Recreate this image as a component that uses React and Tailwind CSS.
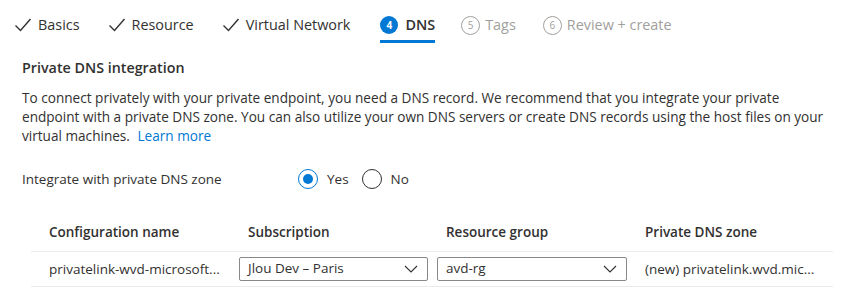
import React from "react";

function Check() {
  return (
    <svg width="18" height="18" viewBox="0 0 18 18" fill="none">
      <path d="M1.5 9.5 L6.5 14.5 L16.5 3" stroke="#323130" strokeWidth="1.4" />
    </svg>
  );
}

function Chevron() {
  return (
    <svg width="14" height="8" viewBox="0 0 14 8" fill="none">
      <path d="M1 1 L7 7 L13 1" stroke="#323130" strokeWidth="1.1" />
    </svg>
  );
}

function Select({ value, w }) {
  return (
    <div className={`flex items-center justify-between h-[24px] border border-[#8a8886] rounded-[2px] pl-[8px] pr-[9px] ${w}`}>
      <span className="text-[13.5px] leading-none">{value}</span>
      <Chevron />
    </div>
  );
}

export default function App() {
  return (
    <div className="w-[863px] h-[295px] bg-white text-[#323130] font-['Open_Sans',sans-serif] overflow-hidden">
      {/* Tabs */}
      <div className="flex items-start pl-[14px] pt-[13px] h-[44px] text-[14.4px]">
        <div className="flex items-center gap-[6px] h-[24px]">
          <Check />
          <span>Basics</span>
        </div>
        <div className="flex items-center gap-[6px] h-[24px] ml-[28px]">
          <Check />
          <span>Resource</span>
        </div>
        <div className="flex items-center gap-[6px] h-[24px] ml-[28px]">
          <Check />
          <span>Virtual Network</span>
        </div>
        <div className="flex flex-col ml-[30px]">
          <div className="flex items-center gap-[7px] h-[24px]">
            <span className="w-[18px] h-[18px] rounded-full bg-[#0078d4] text-white text-[10px] font-bold flex items-center justify-center">4</span>
            <span className="font-semibold">DNS</span>
          </div>
          <div className="h-[3px] bg-[#0078d4] mt-[3px]" />
        </div>
        <div className="flex items-center gap-[5px] h-[24px] text-[#a19f9d] ml-[26px]">
          <span className="w-[19px] h-[19px] rounded-full border border-[#a19f9d] text-[10px] flex items-center justify-center">5</span>
          <span>Tags</span>
        </div>
        <div className="flex items-center gap-[5px] h-[24px] text-[#a19f9d] ml-[27px]">
          <span className="w-[19px] h-[19px] rounded-full border border-[#a19f9d] text-[10px] flex items-center justify-center">6</span>
          <span>Review + create</span>
        </div>
      </div>

      <div className="pl-[22px] pr-[20px]">
        <h2 className="text-[14.3px] font-semibold mt-[14px] leading-[20px]">Private DNS integration</h2>
        <p className="text-[13.6px] leading-[19px] mt-[10px]">
          <span className="block whitespace-nowrap">To connect privately with your private endpoint, you need a DNS record. We recommend that you integrate your private</span>
          <span className="block whitespace-nowrap">endpoint with a private DNS zone. You can also utilize your own DNS servers or create DNS records using the host files on your</span>
          <span className="block whitespace-nowrap">virtual machines. <span className="ml-[4px] text-[#0078d4]">Learn more</span></span>
        </p>

        <div className="flex items-center mt-[22px] h-[24px]">
          <span className="w-[276px] text-[13.5px]">Integrate with private DNS zone</span>
          <div className="flex items-center gap-[9px]">
            <span className="w-[20px] h-[20px] rounded-full border border-[#0078d4] flex items-center justify-center">
              <span className="w-[10px] h-[10px] rounded-full bg-[#0078d4]" />
            </span>
            <span className="text-[13.5px]">Yes</span>
          </div>
          <div className="flex items-center gap-[9px] ml-[13px]">
            <span className="w-[20px] h-[20px] rounded-full border border-[#323130]" />
            <span className="text-[13.5px]">No</span>
          </div>
        </div>

        {/* Table */}
        <div className="mt-[25px] ml-[9px] w-[802px] text-[13.5px]">
          <div className="grid grid-cols-[199px_198px_199px_1fr] h-[36px] items-end pb-[9px] border-b border-[#edebe9] pl-[18px] font-semibold">
            <span>Configuration name</span>
            <span>Subscription</span>
            <span>Resource group</span>
            <span>Private DNS zone</span>
          </div>
          <div className="grid grid-cols-[199px_198px_199px_1fr] h-[35px] items-center border-b border-[#edebe9] pl-[18px]">
            <span className="truncate pr-[14px]">privatelink-wvd-microsoft...</span>
            <div className="-ml-[9px]"><Select value="Jlou Dev – Paris" w="w-[189px]" /></div>
            <div className="-ml-[9px]"><Select value="avd-rg" w="w-[190px]" /></div>
            <span>(new) privatelink.wvd.mic...</span>
          </div>
        </div>
      </div>
    </div>
  );
}
